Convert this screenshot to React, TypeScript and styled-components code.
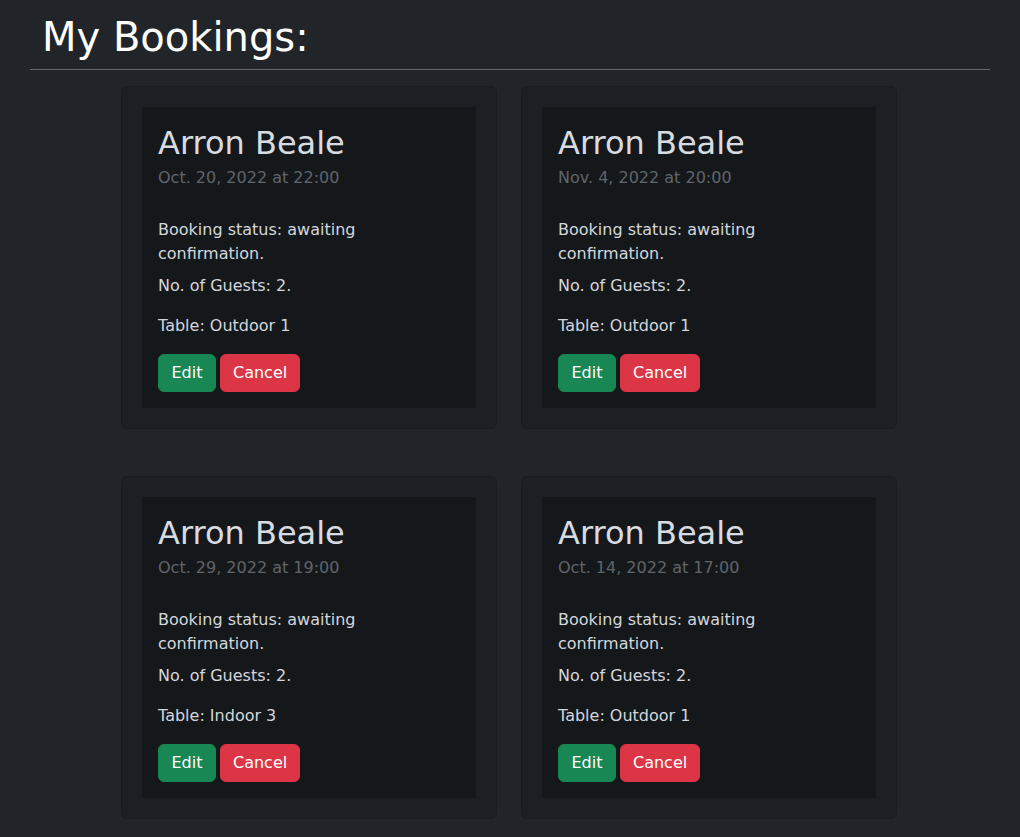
import React from "react";
import styled, { createGlobalStyle } from "styled-components";

const GlobalStyle = createGlobalStyle`
  html, body {
    margin: 0;
    padding: 0;
    background: #212529;
  }
  body {
    font-family: "DejaVu Sans", "Liberation Sans", sans-serif;
    color: #dee2e6;
    font-size: 16px;
    line-height: 1.5;
  }
  * { box-sizing: border-box; }
`;

const Page = styled.div`
  width: 960px;
  margin: 0 auto;
  min-height: 837px;
`;

const Title = styled.h1`
  margin: 0;
  padding: 13px 12px 0;
  font-size: 40px;
  font-weight: 400;
  line-height: 48px;
  color: #ffffff;
`;

const Rule = styled.hr`
  margin: 8px 0 16px;
  border: 0;
  border-top: 1px solid rgba(255, 255, 255, 0.3);
`;

const Grid = styled.div`
  display: grid;
  grid-template-columns: repeat(2, 376px);
  justify-content: center;
  column-gap: 24px;
  row-gap: 47px;
  padding-right: 2px;
`;

const Card = styled.div`
  background: #1c1f23;
  border: 1px solid #191c1f;
  border-radius: 6px;
  padding: 20px;
`;

const Inner = styled.div`
  background: #15181b;
  padding: 16px;
`;

const Name = styled.h2`
  margin: 0;
  font-size: 32px;
  font-weight: 400;
  line-height: 40px;
  color: #d8dce0;
`;

const DateText = styled.div`
  margin-top: 3px;
  color: #5f656b;
  line-height: 24px;
`;

const Info = styled.p<{ $top: number }>`
  margin: ${(p) => p.$top}px 0 0;
  line-height: 24px;
  color: #d3d7db;
`;

const Actions = styled.div`
  display: flex;
  gap: 4px;
  margin-top: 16px;
`;

const Button = styled.button<{ $variant: "success" | "danger" }>`
  font-family: inherit;
  font-size: 16px;
  line-height: 24px;
  padding: ${(p) => (p.$variant === "success" ? "6px 12.5px" : "6px 12px")};
  border-radius: 6px;
  color: #ffffff;
  cursor: pointer;
  background: ${(p) => (p.$variant === "success" ? "#198754" : "#dc3545")};
  border: 1px solid ${(p) => (p.$variant === "success" ? "#198754" : "#dc3545")};
`;

const bookings = [
  { name: "Arron Beale", date: "Oct. 20, 2022 at 22:00", guests: 2, table: "Outdoor 1" },
  { name: "Arron Beale", date: "Nov. 4, 2022 at 20:00", guests: 2, table: "Outdoor 1" },
  { name: "Arron Beale", date: "Oct. 29, 2022 at 19:00", guests: 2, table: "Indoor 3" },
  { name: "Arron Beale", date: "Oct. 14, 2022 at 17:00", guests: 2, table: "Outdoor 1" },
];

export default function App() {
  return (
    <>
      <GlobalStyle />
      <Page>
        <Title>My Bookings:</Title>
        <Rule />
        <Grid>
          {bookings.map((b, i) => (
            <Card key={i}>
              <Inner>
                <Name>{b.name}</Name>
                <DateText>{b.date}</DateText>
                <Info $top={28}>Booking status: awaiting confirmation.</Info>
                <Info $top={8}>No. of Guests: {b.guests}.</Info>
                <Info $top={16}>Table: {b.table}</Info>
                <Actions>
                  <Button $variant="success">Edit</Button>
                  <Button $variant="danger">Cancel</Button>
                </Actions>
              </Inner>
            </Card>
          ))}
        </Grid>
      </Page>
    </>
  );
}
